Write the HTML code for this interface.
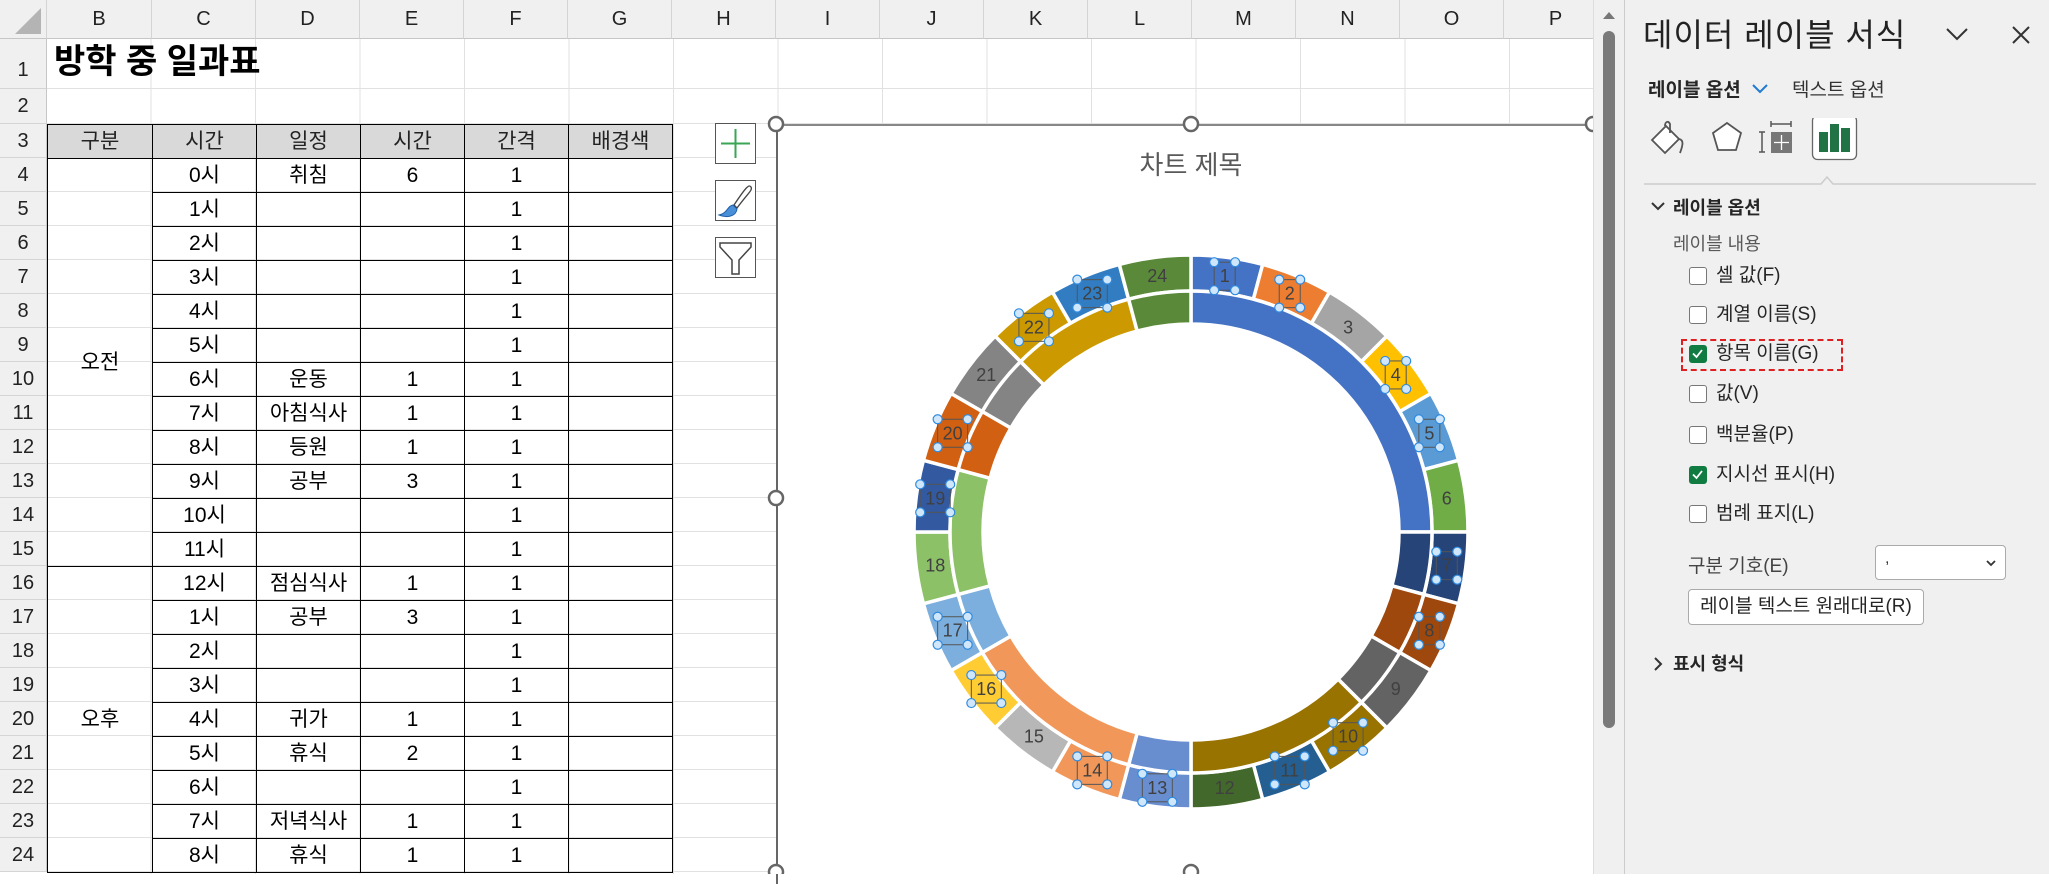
<!DOCTYPE html>
<html><head><meta charset="utf-8"><style>
*{margin:0;padding:0;box-sizing:border-box}
body{width:2049px;height:874px;overflow:hidden;background:#fff;position:relative;font-family:"Liberation Sans","Noto Sans CJK KR",sans-serif;}
.abs{position:absolute}
#grid{left:47px;top:39px;width:1546px;height:835px;
background-image:repeating-linear-gradient(to right,transparent 0,transparent 103.5px,#e1e1e1 103.5px,#e1e1e1 104.5px),linear-gradient(#e1e1e1,#e1e1e1),linear-gradient(#e1e1e1,#e1e1e1),repeating-linear-gradient(to bottom,transparent 0,transparent 33px,#e1e1e1 33px,#e1e1e1 34px);
background-size:1546px 835px,1546px 1px,1546px 1px,1546px 750px;
background-position:0 0,0 49px,0 84px,0 85px;background-repeat:no-repeat}
.ch{position:absolute;top:0;height:39px;background:#f0f0f0;border-right:1px solid #d4d4d4;border-bottom:1px solid #c6c6c6;text-align:center;line-height:39px;font-size:20px;color:#222}
.rh{position:absolute;left:0;width:47px;background:#f0f0f0;border-bottom:1px solid #d4d4d4;border-right:1px solid #c6c6c6;text-align:center;font-size:20px;color:#222}
table{position:absolute;left:47px;top:124px;border-collapse:collapse;table-layout:fixed;font-family:"Liberation Sans","Noto Sans CJK KR",sans-serif;font-size:21px}
td{border:1.5px solid #000;height:34px;text-align:center;padding:0;line-height:32px;color:#000}
tr.h td{background:#d9d9d9;color:#222}
.cb{position:absolute;left:1689px;width:18px;height:18px;border:1.5px solid #777;border-radius:3px;background:#fff}
.cb.on{background:#107c41;border-color:#107c41}
.lb{position:absolute;left:1716px;font-size:19px;color:#262626;line-height:22px}
</style></head><body>
<div id="grid" class="abs"></div>
<div class="ch" style="left:0;width:47px;background:#f0f0f0"><div style="position:absolute;right:5px;bottom:4px;width:0;height:0;border-left:26px solid transparent;border-bottom:26px solid #b4b4b4"></div></div>
<div class="ch" style="left:47px;width:105px">B</div>
<div class="ch" style="left:152px;width:104px">C</div>
<div class="ch" style="left:256px;width:104px">D</div>
<div class="ch" style="left:360px;width:104px">E</div>
<div class="ch" style="left:464px;width:104px">F</div>
<div class="ch" style="left:568px;width:104px">G</div>
<div class="ch" style="left:672px;width:104px">H</div>
<div class="ch" style="left:776px;width:104px">I</div>
<div class="ch" style="left:880px;width:104px">J</div>
<div class="ch" style="left:984px;width:104px">K</div>
<div class="ch" style="left:1088px;width:104px">L</div>
<div class="ch" style="left:1192px;width:104px">M</div>
<div class="ch" style="left:1296px;width:104px">N</div>
<div class="ch" style="left:1400px;width:104px">O</div>
<div class="ch" style="left:1504px;width:104px">P</div>
<div class="rh" style="top:39px;height:50px;line-height:62px">1</div>
<div class="rh" style="top:89px;height:35px;line-height:35px">2</div>
<div class="rh" style="top:124px;height:34px;line-height:34px">3</div>
<div class="rh" style="top:158px;height:34px;line-height:34px">4</div>
<div class="rh" style="top:192px;height:34px;line-height:34px">5</div>
<div class="rh" style="top:226px;height:34px;line-height:34px">6</div>
<div class="rh" style="top:260px;height:34px;line-height:34px">7</div>
<div class="rh" style="top:294px;height:34px;line-height:34px">8</div>
<div class="rh" style="top:328px;height:34px;line-height:34px">9</div>
<div class="rh" style="top:362px;height:34px;line-height:34px">10</div>
<div class="rh" style="top:396px;height:34px;line-height:34px">11</div>
<div class="rh" style="top:430px;height:34px;line-height:34px">12</div>
<div class="rh" style="top:464px;height:34px;line-height:34px">13</div>
<div class="rh" style="top:498px;height:34px;line-height:34px">14</div>
<div class="rh" style="top:532px;height:34px;line-height:34px">15</div>
<div class="rh" style="top:566px;height:34px;line-height:34px">16</div>
<div class="rh" style="top:600px;height:34px;line-height:34px">17</div>
<div class="rh" style="top:634px;height:34px;line-height:34px">18</div>
<div class="rh" style="top:668px;height:34px;line-height:34px">19</div>
<div class="rh" style="top:702px;height:34px;line-height:34px">20</div>
<div class="rh" style="top:736px;height:34px;line-height:34px">21</div>
<div class="rh" style="top:770px;height:34px;line-height:34px">22</div>
<div class="rh" style="top:804px;height:34px;line-height:34px">23</div>
<div class="rh" style="top:838px;height:34px;line-height:34px">24</div>
<div class="abs" style="left:54px;top:40px;font-size:34px;font-weight:bold;line-height:44px;color:#000">방학 중 일과표</div>
<table>
<colgroup><col style="width:105px"><col style="width:104px"><col style="width:104px"><col style="width:104px"><col style="width:104px"><col style="width:104px"></colgroup>
<tr class="h"><td>구분</td><td>시간</td><td>일정</td><td>시간</td><td>간격</td><td>배경색</td></tr>
<tr><td rowspan="12">오전</td><td>0시</td><td>취침</td><td>6</td><td>1</td><td></td></tr>
<tr><td>1시</td><td></td><td></td><td>1</td><td></td></tr>
<tr><td>2시</td><td></td><td></td><td>1</td><td></td></tr>
<tr><td>3시</td><td></td><td></td><td>1</td><td></td></tr>
<tr><td>4시</td><td></td><td></td><td>1</td><td></td></tr>
<tr><td>5시</td><td></td><td></td><td>1</td><td></td></tr>
<tr><td>6시</td><td>운동</td><td>1</td><td>1</td><td></td></tr>
<tr><td>7시</td><td>아침식사</td><td>1</td><td>1</td><td></td></tr>
<tr><td>8시</td><td>등원</td><td>1</td><td>1</td><td></td></tr>
<tr><td>9시</td><td>공부</td><td>3</td><td>1</td><td></td></tr>
<tr><td>10시</td><td></td><td></td><td>1</td><td></td></tr>
<tr><td>11시</td><td></td><td></td><td>1</td><td></td></tr>
<tr><td rowspan="10">오후</td><td>12시</td><td>점심식사</td><td>1</td><td>1</td><td></td></tr>
<tr><td>1시</td><td>공부</td><td>3</td><td>1</td><td></td></tr>
<tr><td>2시</td><td></td><td></td><td>1</td><td></td></tr>
<tr><td>3시</td><td></td><td></td><td>1</td><td></td></tr>
<tr><td>4시</td><td>귀가</td><td>1</td><td>1</td><td></td></tr>
<tr><td>5시</td><td>휴식</td><td>2</td><td>1</td><td></td></tr>
<tr><td>6시</td><td></td><td></td><td>1</td><td></td></tr>
<tr><td>7시</td><td>저녁식사</td><td>1</td><td>1</td><td></td></tr>
<tr><td>8시</td><td>휴식</td><td>1</td><td>1</td><td></td></tr>
</table>
<div class="abs" style="left:715px;top:123px;width:41px;height:41px;border:1px solid #555;background:#fff"><svg width="39" height="39"><path d="M19.5 5V34M5 19.5H34" stroke="#3aa655" stroke-width="2"/></svg></div>
<div class="abs" style="left:715px;top:180px;width:41px;height:41px;border:1px solid #555;background:#fff"><svg width="39" height="39"><path d="M35 6 C33 3 30 6 18 24 L21 27 C32 12 37 9 35 6Z" fill="#fff" stroke="#444" stroke-width="1.3"/><path d="M17 24 C11 25 12 32 3 34 C10 37 20 36 21 28Z" fill="#4a90d9" stroke="#1e5fa8" stroke-width="1"/></svg></div>
<div class="abs" style="left:715px;top:237px;width:41px;height:41px;border:1px solid #555;background:#fff"><svg width="39" height="39"><path d="M4 5H35V9L23 22V36H16V22L4 9Z" fill="#fff" stroke="#444" stroke-width="1.5"/></svg></div>
<div class="abs" style="left:776px;top:124px;width:817px;height:760px;background:#fff;border-left:2px solid #666;border-top:2px solid #888"></div>
<div class="abs" style="left:1111px;top:145px;width:160px;text-align:center;font-size:26px;color:#595959">차트 제목</div>
<svg class="abs" style="left:0;top:0" width="2049" height="874">
<g id="ring" transform="translate(1191 532)"></g>
<g transform="translate(1191 532)" font-family="Liberation Sans, sans-serif" font-size="18" fill="#404040" text-anchor="middle" dominant-baseline="central">
<text x="33.7" y="-255.8">1</text><text x="98.7" y="-238.4">2</text><text x="157.1" y="-204.7">3</text><text x="204.7" y="-157.1">4</text><text x="238.4" y="-98.7">5</text><text x="255.8" y="-33.7">6</text><text x="255.8" y="33.7">7</text><text x="238.4" y="98.7">8</text><text x="204.7" y="157.1">9</text><text x="157.1" y="204.7">10</text><text x="98.7" y="238.4">11</text><text x="33.7" y="255.8">12</text><text x="-33.7" y="255.8">13</text><text x="-98.7" y="238.4">14</text><text x="-157.1" y="204.7">15</text><text x="-204.7" y="157.1">16</text><text x="-238.4" y="98.7">17</text><text x="-255.8" y="33.7">18</text><text x="-255.8" y="-33.7">19</text><text x="-238.4" y="-98.7">20</text><text x="-204.7" y="-157.1">21</text><text x="-157.1" y="-204.7">22</text><text x="-98.7" y="-238.4">23</text><text x="-33.7" y="-255.8">24</text>
</g>
<g id="hnd" transform="translate(1191 532)"></g>
<g fill="#fff" stroke="#666" stroke-width="2.5"><circle cx="776" cy="124" r="7"/><circle cx="1191" cy="124" r="7"/><circle cx="1593" cy="124" r="7"/><circle cx="776" cy="498" r="7"/><circle cx="776" cy="872" r="7"/><circle cx="1191" cy="872" r="7"/></g>
</svg>
<div class="abs" style="left:1593px;top:0;width:31px;height:874px;background:#f0f0f0;border-left:1px solid #ddd"></div>
<div class="abs" style="left:1603px;top:12px;width:0;height:0;border-left:6px solid transparent;border-right:6px solid transparent;border-bottom:7px solid #777"></div>
<div class="abs" style="left:1603px;top:31px;width:12px;height:697px;background:#7a7a7a;border-radius:6px"></div>
<div class="abs" style="left:1624px;top:0;width:425px;height:874px;background:#f0f0f0;border-left:1px solid #ccc"></div>
<div class="abs" style="left:1643px;top:14px;font-size:32px;color:#222;line-height:42px;letter-spacing:1px">데이터 레이블 서식</div>
<svg class="abs" style="left:1944px;top:24px" width="26" height="20"><path d="M3 5L13 15L23 5" fill="none" stroke="#333" stroke-width="2"/></svg>
<svg class="abs" style="left:2011px;top:25px" width="20" height="20"><path d="M2 2L18 18M18 2L2 18" stroke="#333" stroke-width="2"/></svg>
<div class="abs" style="left:1648px;top:75px;font-size:19px;font-weight:bold;color:#262626">레이블 옵션</div>
<svg class="abs" style="left:1751px;top:82px" width="18" height="14"><path d="M2 3L9 10L16 3" fill="none" stroke="#1f7ad0" stroke-width="2"/></svg>
<div class="abs" style="left:1792px;top:75px;font-size:19px;color:#333">텍스트 옵션</div>
<svg class="abs" style="left:1648px;top:118px" width="240" height="62">
<g fill="none" stroke="#555" stroke-width="1.8"><path d="M4 22L18 8L31 21L17 35Z" fill="#fff"/><path d="M17 8C17 4 20 2 22 6V15" /><path d="M31 21C36 22 35 27 32 35"/></g>
<path d="M79 5L93 15L88 32H70L65 15Z" fill="#fff" stroke="#555" stroke-width="1.8"/>
<g stroke="#555" stroke-width="1.5" fill="none"><path d="M123 6H143M123 3V9M143 3V9M114 14V34M111 14H117M111 34H117"/></g>
<rect x="123" y="14" width="21" height="21" fill="#777"/>
<path d="M133.5 17V32M126 24.5H141" stroke="#fff" stroke-width="1.3"/>
<rect x="164.5" y="-2.5" width="44" height="44" rx="5" fill="#fff" stroke="#666" stroke-width="1.3"/>
<rect x="171" y="14" width="9" height="20" fill="#217346"/><rect x="182" y="6" width="9" height="28" fill="#217346"/><rect x="193" y="10" width="9" height="24" fill="#217346"/>
</svg>
<svg class="abs" style="left:1640px;top:170px" width="400" height="16"><path d="M4 14H181L187 7L193 14H396" fill="none" stroke="#ccc" stroke-width="1.5"/></svg>
<svg class="abs" style="left:1650px;top:200px" width="16" height="14"><path d="M2 3L8 9L14 3" fill="none" stroke="#333" stroke-width="2"/></svg>
<div class="abs" style="left:1673px;top:194px;font-size:18px;font-weight:bold;color:#262626">레이블 옵션</div>
<div class="abs" style="left:1673px;top:230px;font-size:18px;color:#595959">레이블 내용</div>
<div class="cb" style="top:267px"></div><div class="lb" style="top:265px">셀 값(F)</div>
<div class="cb" style="top:306px"></div><div class="lb" style="top:304px">계열 이름(S)</div>
<div class="cb on" style="top:345px"><svg width="15" height="15"><path d="M3 7.5L6.5 11L12 4" fill="none" stroke="#fff" stroke-width="1.8"/></svg></div><div class="lb" style="top:343px">항목 이름(G)</div>
<div class="abs" style="left:1681px;top:339px;width:162px;height:32px;border:2.5px dashed #e02020"></div>
<div class="cb" style="top:385px"></div><div class="lb" style="top:383px">값(V)</div>
<div class="cb" style="top:426px"></div><div class="lb" style="top:424px">백분율(P)</div>
<div class="cb on" style="top:466px"><svg width="15" height="15"><path d="M3 7.5L6.5 11L12 4" fill="none" stroke="#fff" stroke-width="1.8"/></svg></div><div class="lb" style="top:464px">지시선 표시(H)</div>
<div class="cb" style="top:505px"></div><div class="lb" style="top:503px">범례 표지(L)</div>
<div class="abs" style="left:1688px;top:551px;font-size:19px;color:#444">구분 기호(E)</div>
<div class="abs" style="left:1875px;top:545px;width:131px;height:35px;background:#fff;border:1px solid #aaa;border-radius:4px"><span style="position:absolute;left:9px;top:4px;font-size:16px;color:#333">,</span><svg style="position:absolute;right:8px;top:12px" width="12" height="10"><path d="M2 3L6 7L10 3" fill="none" stroke="#333" stroke-width="1.8"/></svg></div>
<div class="abs" style="left:1688px;top:589px;width:236px;height:36px;background:#fff;border:1px solid #aaa;border-radius:4px;text-align:center;line-height:34px;font-size:19px;color:#262626">레이블 텍스트 원래대로(R)</div>
<svg class="abs" style="left:1652px;top:656px" width="12" height="16"><path d="M3 2L9 8L3 14" fill="none" stroke="#333" stroke-width="2"/></svg>
<div class="abs" style="left:1673px;top:650px;font-size:18px;font-weight:bold;color:#262626">표시 형식</div>
<script>
(function(){
var ns="http://www.w3.org/2000/svg";
function arc(r0,r1,a0,a1,col,g){
 var t=function(a){return a*Math.PI/180};
 function p(r,a){return [(r*Math.sin(t(a))).toFixed(2),(-r*Math.cos(t(a))).toFixed(2)]}
 var l=(a1-a0)>180?1:0;
 var A=p(r1,a0),B=p(r1,a1),C=p(r0,a1),D=p(r0,a0);
 var d="M"+A+"A"+r1+","+r1+" 0 "+l+" 1 "+B+"L"+C+"A"+r0+","+r0+" 0 "+l+" 0 "+D+"Z";
 var e=document.createElementNS(ns,"path");e.setAttribute("d",d);e.setAttribute("fill",col);e.setAttribute("stroke","#fff");e.setAttribute("stroke-width","3.5");g.appendChild(e);
}
var g=document.getElementById("ring");
var oc=["#4472c4","#ed7d31","#a5a5a5","#ffc000","#5b9bd5","#70ad47","#264478","#9e480e","#636363","#997300","#255e91","#43682b","#698ed0","#f1975a","#b7b7b7","#ffcd33","#7cafdd","#8cc168","#335aa1","#d26012","#848484","#cc9a00","#327dc2","#5a8a39"];
for(var i=0;i<24;i++)arc(241,277,i*15,(i+1)*15,oc[i],g);
var inn=[[0,90,"#4472c4"],[90,105,"#264478"],[105,120,"#9e480e"],[120,135,"#636363"],[135,180,"#997300"],[180,195,"#698ed0"],[195,240,"#f1975a"],[240,255,"#7cafdd"],[255,285,"#8cc168"],[285,300,"#d26012"],[300,315,"#848484"],[315,345,"#cc9a00"],[345,360,"#5a8a39"]];
inn.forEach(function(s){arc(208,241,s[0],s[1],s[2],g)});
var h=document.getElementById("hnd");
var sel=[1,2,4,5,7,8,10,11,13,14,16,17,19,20,22,23];
sel.forEach(function(n){
 var a=(n-0.5)*15*Math.PI/180,x=258*Math.sin(a),y=-258*Math.cos(a);
 var w=n>9?30:21,hh=28;
 var r=document.createElementNS(ns,"rect");r.setAttribute("x",x-w/2);r.setAttribute("y",y-hh/2);r.setAttribute("width",w);r.setAttribute("height",hh);r.setAttribute("fill","none");r.setAttribute("stroke","#555");r.setAttribute("stroke-width","1");h.appendChild(r);
 [[-1,-1],[1,-1],[-1,1],[1,1]].forEach(function(c){var ci=document.createElementNS(ns,"circle");ci.setAttribute("cx",x+c[0]*w/2);ci.setAttribute("cy",y+c[1]*hh/2);ci.setAttribute("r","4.5");ci.setAttribute("fill","#cfe6fb");ci.setAttribute("stroke","#2f8be0");ci.setAttribute("stroke-width","1.2");h.appendChild(ci);});
});
})();
</script>
</body></html>
